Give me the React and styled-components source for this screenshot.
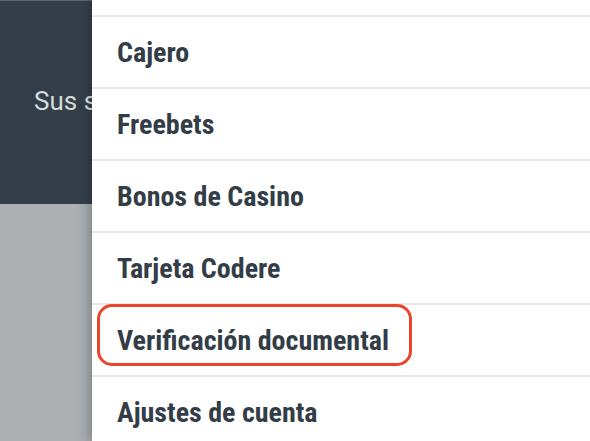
import React from "react";
import styled, { createGlobalStyle } from "styled-components";

const GlobalStyle = createGlobalStyle`
  html, body {
    margin: 0;
    padding: 0;
    height: 100%;
    overflow: hidden;
  }
  #root {
    height: 100%;
  }
`;

const Page = styled.div`
  display: flex;
  width: 590px;
  height: 441px;
  overflow: hidden;
  font-family: Roboto, "Liberation Sans", sans-serif;
`;

const Backdrop = styled.div`
  width: 92px;
  flex-shrink: 0;
  display: flex;
  flex-direction: column;
`;

const Header = styled.div`
  height: 204px;
  background: #343e48;
  border-top: 1px solid #5c656d;
  box-sizing: border-box;
  padding: 85px 0 0 34px;
  overflow: hidden;
  white-space: nowrap;
  color: #d6dadd;
  font-size: 26px;
`;

const Dimmed = styled.div`
  flex: 1;
  background: linear-gradient(to right, #aeb1b4 80%, #a2a5a8 100%);
`;

const Drawer = styled.nav`
  flex: 1;
  background: #fff;
  padding-top: 15px;
  box-shadow: -3px 0 8px rgba(0, 0, 0, 0.18);
  position: relative;
  z-index: 1;
`;

const Item = styled.div`
  position: relative;
  height: 70px;
  border-top: 2px solid #e8e8e8;
  display: flex;
  align-items: center;
  padding-left: 25px;
  font-family: "Roboto Condensed", "Liberation Sans Narrow", Roboto, sans-serif;
  font-weight: 700;
  font-size: 28px;
  color: #333d47;
  white-space: nowrap;
`;

const Highlight = styled.span`
  position: absolute;
  left: 5px;
  top: -1px;
  width: 315px;
  height: 62px;
  box-sizing: border-box;
  border: 3px solid #e8452b;
  border-radius: 15px;
`;

const items = [
  "Cajero",
  "Freebets",
  "Bonos de Casino",
  "Tarjeta Codere",
  "Verificación documental",
  "Ajustes de cuenta",
];

export default function App() {
  return (
    <>
      <GlobalStyle />
      <Page>
        <Backdrop>
          <Header>Sus saldos</Header>
          <Dimmed />
        </Backdrop>
        <Drawer>
          {items.map((label) => (
            <Item key={label}>
              {label}
              {label === "Verificación documental" && <Highlight />}
            </Item>
          ))}
        </Drawer>
      </Page>
    </>
  );
}
